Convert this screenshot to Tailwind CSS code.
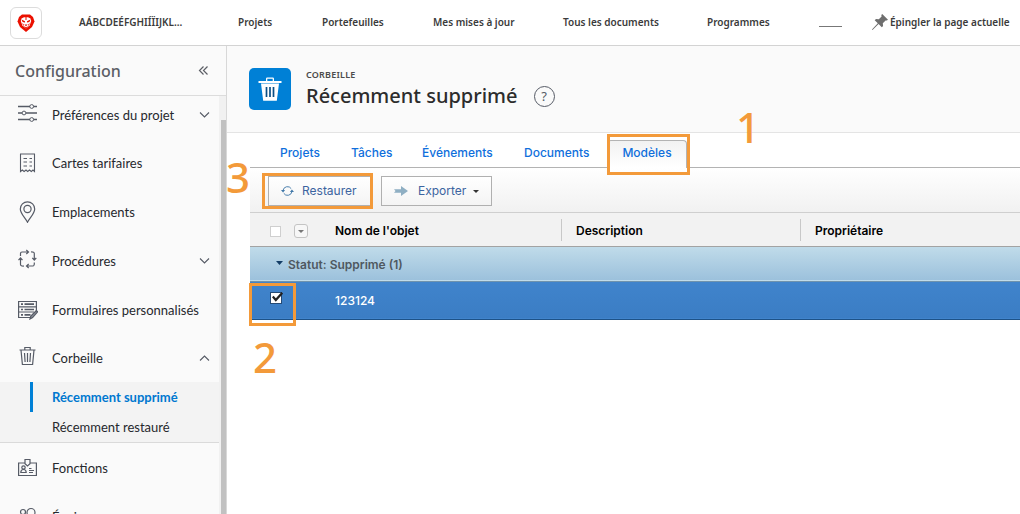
<!DOCTYPE html>
<html lang="fr">
<head>
<meta charset="utf-8">
<meta name="viewport" content="width=device-width, initial-scale=1">
<title>Configuration – Récemment supprimé</title>
<script src="https://cdn.jsdelivr.net/npm/@tailwindcss/browser@4"></script>
</head>
<body class="flex h-screen flex-col overflow-hidden bg-white font-['Noto_Sans','Open_Sans',sans-serif] text-[#2c2c2c]">

<header class="flex h-[46px] shrink-0 items-center border-b border-[#d3d3d3] bg-white pl-[10px]">
  <a href="#" aria-label="Accueil" class="mr-[37px] flex size-8 shrink-0 items-center justify-center rounded-md border border-[#dcdcdc]">
    <svg class="size-[18px]" viewBox="0 0 18 18">
      <path d="M5 .5h8l3 2.500 1.500 4.500-2.500 5.500-6 5-6-5L.5 7.500 2 3z" fill="#eb1000"/>
      <path d="M4.500 4.500 7 3.200h4L13.500 4.500l.7 2.500-1.600 4.500L9 14.500 5.400 11.500 3.800 7z" fill="#fff"/>
      <path d="M4.500 5.500l3.500 1.800v1.200L5.600 8zM13.500 5.500 10 7.300v1.200l2.400-.5zM7.300 10.500h3.400L9 12.300zM6.500 12 9 13.200 11.500 12 9 14.500zM8.500 3h1v3h-1zM5 9.300l1.700 1v2zM13 9.300l-1.700 1v2z" fill="#eb1000"/>
    </svg>
  </a>
  <nav class="grid grow grid-cols-[159px_84px_111px_130px_144px_112px_53px_1fr] items-center pb-[2px] text-[10px] leading-4 font-semibold whitespace-nowrap text-[#3b3b3b]">
    <a href="#">AÁBCDEÉFGHIÍÏIJKL…</a>
    <a href="#">Projets</a>
    <a href="#">Portefeuilles</a>
    <a href="#">Mes mises à jour</a>
    <a href="#">Tous les documents</a>
    <a href="#">Programmes</a>
    <a href="#" aria-label="Page épinglée" class="mt-[10px] w-[23px] border-b border-[#777]"></a>
    <button class="flex items-center gap-[2px]">
      <svg class="size-4" viewBox="0 0 16 16" fill="#6e6e6e"><path d="M10.200 0 16 5.800l-1.200.8-1.200-.2-2.800 2.900.3 2.600-1.300 1.300-3.200-3.200L.8 15.800 0 16l.2-.8L5.800 9.200 2.700 6.200 4 4.900l2.800.3L9.600 2.400l-.3-1.300z"/></svg>
      Épingler la page actuelle
    </button>
  </nav>
</header>

<div class="flex min-h-0 grow">
  <aside class="flex w-[227px] shrink-0 flex-col border-r border-[#d8d8d8] bg-[#fafafa]">
    <div class="flex h-[50px] shrink-0 items-center justify-between border-b border-[#dcdcdc] pr-[17px] pl-[15px]">
      <h2 class="text-[16px] leading-6 font-medium text-[#5c5f66]">Configuration</h2>
      <button aria-label="Réduire le menu"><svg class="h-[9px] w-[11px]" viewBox="0 0 11 9" fill="none" stroke="#5c5f66" stroke-width="1.200"><path d="M5.500.5l-4 4 4 4M9.500.5l-4 4 4 4"/></svg></button>
    </div>
    <div class="flex min-h-0 grow">
      <ul class="min-w-0 grow overflow-hidden font-['Lato','Noto_Sans',sans-serif] text-[13px] leading-4 text-[#26282d]">
        <li><a href="#" class="flex h-[42px] items-center gap-[14px] pr-[9px] pb-1 pl-[18px]">
          <svg class="mb-1 size-5 shrink-0" viewBox="0 0 20 20" fill="none" stroke="#565b66"><path d="M0 3.500h12M15.500 3.500H19M0 10h4M8 10h11M0 16.500h12M15.500 16.500H19" stroke-width="1.300"/><circle cx="13.700" cy="3.500" r="1.900"/><circle cx="6" cy="10" r="1.900"/><circle cx="13.700" cy="16.500" r="1.900"/></svg>
          <span class="grow">Préférences du projet</span>
          <svg class="h-[6px] w-[11px]" viewBox="0 0 11 6" fill="none" stroke="#565b66" stroke-width="1.100"><path d="M1 .5l4.500 4.500L10 .5"/></svg></a></li>
        <li><a href="#" class="flex h-[49px] items-center gap-[14px] pl-[18px]">
          <svg class="size-5 shrink-0" viewBox="0 0 20 20" fill="none" stroke="#565b66" stroke-width="1.100"><path d="M2 1h15M2.500 1v17.500l1.800-1.500 1.800 1.500L8 17l1.700 1.500 1.800-1.500 1.800 1.500 1.700-1.500 1.500 1.500V1"/><path d="M5.500 5.500H9M11.500 5.500H14M5.500 9H9M11.500 9H14M5.500 13H9M11.500 13H14" stroke-width="1.200"/></svg>
          <span>Cartes tarifaires</span></a></li>
        <li><a href="#" class="flex h-[49px] items-center gap-[14px] pl-[18px]">
          <svg class="h-[22px] w-5 shrink-0" viewBox="0 0 20 22" fill="none" stroke="#565b66" stroke-width="1.200"><path d="M9.500 21.300C7 16.500 2.300 12.500 2.300 8a7.200 7.200 0 0 1 14.400 0c0 4.500-4.700 8.500-7.200 13.300z"/><circle cx="9.500" cy="8" r="3.600"/></svg>
          <span>Emplacements</span></a></li>
        <li><a href="#" class="flex h-[49px] items-center gap-[14px] pr-[9px] pl-[18px]">
          <svg class="mb-1 size-5 shrink-0" viewBox="0 0 20 20" fill="none" stroke="#565b66" stroke-width="1.200"><path d="M3 7V4.500Q3 3 4.500 3H11M8.800 1 11 3 8.800 5M13.500 3Q16.800 2.700 16.800 4.500V11M14.800 8.800l2 2.200 2-2.200M16.800 13.500Q17 17 15.300 17H9M11.200 15 9 17l2.200 2M6.500 17Q3 17.300 3 15.500V9M1 11.200 3 9l2 2.200" transform="translate(-.5)"/></svg>
          <span class="grow">Procédures</span>
          <svg class="h-[6px] w-[11px]" viewBox="0 0 11 6" fill="none" stroke="#565b66" stroke-width="1.100"><path d="M1 .5l4.500 4.500L10 .5"/></svg></a></li>
        <li><a href="#" class="flex h-[49px] items-center gap-[14px] pl-[18px] whitespace-nowrap">
          <svg class="size-5 shrink-0" viewBox="0 0 20 20" fill="none" stroke="#565b66" stroke-width="1.200"><path d="M12.500 17.500H.6V1.500h17.800V12M.6 6.800h17.800M.6 12h15.400"/><path d="M3 4.200h2M6.500 4.200h9.500M3 9.500h2M6.500 9.500h9.500M3 14.800h2M6.500 14.800h6" stroke-width="1.700"/><path d="M12 19l.8-3 5.500-5.500 1.300 1.300-5 5.800z" fill="#8b8f98"/></svg>
          <span>Formulaires personnalisés</span></a></li>
        <li><a href="#" class="flex h-12 items-center gap-[14px] pr-[9px] pl-[18px]">
          <svg class="mb-1 size-5 shrink-0" viewBox="0 0 20 20" fill="none" stroke="#565b66" stroke-width="1.200"><path d="M1.500 4h16M6.800 4V1.500h5.400V4M3 4l1.400 14.500h10.200L16 4M6.500 7l.6 9M9.500 7v9M12.500 7l-.6 9"/></svg>
          <span class="grow">Corbeille</span>
          <svg class="h-[6px] w-[11px]" viewBox="0 0 11 6" fill="none" stroke="#565b66" stroke-width="1.100"><path d="M1 5.500 5.500 1 10 5.500"/></svg></a>
          <ul class="border-b border-[#dadada] bg-[#f3f3f3] pl-[30px]">
            <li><a href="#" class="flex h-[30px] items-center border-l-3 border-[#0080d6] pl-[19px] font-bold text-[#0078d0]">Récemment supprimé</a></li>
            <li><a href="#" class="flex h-[30px] items-center pl-[22px]">Récemment restauré</a></li>
          </ul></li>
        <li><a href="#" class="flex h-[49px] items-center gap-[14px] pl-[18px]">
          <svg class="size-5 shrink-0" viewBox="0 0 20 20" fill="none" stroke="#565b66" stroke-width="1.200"><path d="M7 5H.6v12.500h17.800V5H12M7 1.500h5v4.300L9.500 8 7 5.800z"/><circle cx="5.500" cy="9.500" r="1.700"/><path d="M2.800 14.500c0-2 1-3 2.700-3s2.700 1 2.700 3zM11 10.500h2.500M11 12.500h5M11 14.500h4"/></svg>
          <span>Fonctions</span></a></li>
        <li><a href="#" class="flex h-[49px] items-center gap-[14px] pl-[18px]">
          <svg class="size-5 shrink-0" viewBox="0 0 20 20" fill="none" stroke="#565b66" stroke-width="1.200"><circle cx="5" cy="5" r="2.500"/><circle cx="13" cy="5.500" r="4"/><path d="M1 15c0-4 1.500-6 4-6M6 18c0-5 3-8 7-8s6 3 6 8"/></svg>
          <span>Équipes</span></a></li>
      </ul>
      <div class="flex w-[7px] shrink-0 flex-col bg-[#f1f1f1] pt-6 pl-[2px]"><div class="grow bg-[#c1c1c1]"></div></div>
    </div>
  </aside>

  <main class="min-w-0 grow">
    <div class="flex h-[87px] items-center gap-[15px] border-b border-[#e4e4e4] bg-[#fafafa] pl-[22px]">
      <div class="flex size-[42px] items-center justify-center rounded-[5px] bg-[#0080d6]">
        <svg class="size-6" viewBox="0 0 24 24"><path d="M.5 4h7.500V1.800Q8 .5 9.300.5h5.400Q16 .5 16 1.800V4h7.500v2H.5zM9.300 4h5.400V1.800H9.300zM3 6.500h18l-2.200 17.200H5.200z" fill="#fff" fill-rule="evenodd"/><path d="M8.500 10v10M12 10v10M15.500 10v10" stroke="#0b4f85" stroke-width="1.700"/></svg>
      </div>
      <div class="pt-[2px]">
        <p class="text-[9px] leading-3 font-semibold tracking-wide text-[#4b4b4b]">CORBEILLE</p>
        <div class="flex items-center gap-4">
          <h1 class="text-[20px] leading-[30px] font-medium text-[#2c2c2c]">Récemment supprimé</h1>
          <button aria-label="Aide" class="flex size-[21px] items-center justify-center rounded-full border border-[#565b66] text-[13px] leading-4 text-[#565b66]">?</button>
        </div>
      </div>
    </div>

    <section class="pl-[23px] font-['Inter',sans-serif]">
      <nav class="flex h-[35px] items-end border-b border-[#b3b3b3] text-[12px] leading-4 font-medium text-[#0f6fdc]">
        <a href="#" class="ml-[30px] w-[71px] pb-[6px]">Projets</a>
        <a href="#" class="w-[71px] pb-[6px]">Tâches</a>
        <a href="#" class="w-[102px] pb-[6px]">Événements</a>
        <a href="#" class="w-[83px] pb-[6px]">Documents</a>
        <a href="#" aria-current="page" class="relative -mb-px h-[28px] w-20 rounded-t-[4px] border-x border-t border-[#b3b3b3] bg-linear-to-b from-[#f2f2f2] to-white pt-1 text-center">Modèles
          <span class="absolute -top-[7px] -left-px h-[41px] w-[83px] border-3 border-[#f39a3a]"></span>
          <span class="absolute -top-[37px] left-[128px] font-['Noto_Sans',sans-serif] text-[42px] leading-[46px] font-medium text-[#f39a3a]">1</span>
        </a>
      </nav>

      <div class="flex h-[45px] items-center gap-2 border-b border-[#cfcfcf] bg-linear-to-b from-white to-[#f1f1f1] pt-[2px] pl-[18px] text-[12px] leading-4 text-[#3c64a0]">
        <button class="relative flex h-[30px] w-[105px] items-center gap-2 border border-[#b0b0b0] bg-linear-to-b from-white to-[#f4f4f4] pl-3">
          <svg class="h-3 w-[13px]" viewBox="0 0 14 12" fill="none" stroke="#3f77a8" stroke-width="1"><path d="M2.300 5A4.800 4.800 0 0 1 11 3.500M11.700 7A4.800 4.800 0 0 1 3 8.500"/><path d="M0 5h4.400L2.200 7.500zM9.600 7H14L11.800 4.500z" fill="#3f77a8" stroke="none"/></svg>
          Restaurer
          <span class="absolute -top-1 -left-[7px] h-9 w-[111px] border-3 border-[#f39a3a]"></span>
          <span class="absolute -top-[23px] -left-[43px] font-['Noto_Sans',sans-serif] text-[42px] leading-[46px] font-medium text-[#f39a3a]">3</span>
        </button>
        <button class="flex h-[30px] w-[111px] items-center border border-[#b0b0b0] bg-linear-to-b from-white to-[#f4f4f4] pl-3">
          <svg class="mr-[10px] h-[10px] w-[14px]" viewBox="0 0 14 10"><path d="M0 3.200h7V0l7 5-7 5V6.800H0L1.500 5z" fill="#8fafc3"/></svg>
          Exporter
          <svg class="ml-[7px] h-[3px] w-[6px]" viewBox="0 0 6 3"><path d="M0 0h6L3 3z" fill="#333"/></svg>
        </button>
      </div>

      <table class="w-full table-fixed border-collapse text-[12px] leading-4">
        <colgroup><col class="w-[85px]"><col class="w-[226px]"><col class="w-[239px]"><col></colgroup>
        <thead>
          <tr class="h-[33px] border-b border-[#a3a3a3] bg-[#f2f2f2] text-left font-semibold text-black">
            <th class="pt-1 pl-5"><div class="flex items-center gap-[13px]">
              <input type="checkbox" aria-label="Tout sélectionner" class="size-[11px] appearance-none border border-[#cfcfcf] bg-white">
              <button aria-label="Options de sélection" class="flex size-[14px] items-center justify-center rounded-[3px] border border-[#c4c4c4] bg-[#f7f7f7]"><svg class="h-[3px] w-[6px]" viewBox="0 0 6 3"><path d="M0 0h6L3 3z" fill="#777"/></svg></button>
            </div></th>
            <th class="pt-[3px] font-semibold">Nom de l'objet</th>
            <th class="pt-[2px]"><div class="h-[22px] border-l border-[#c8c8c8] pt-1 pl-[14px] font-semibold">Description</div></th>
            <th class="pt-[2px]"><div class="h-[22px] border-l border-[#c8c8c8] pt-1 pl-[14px] font-semibold">Propriétaire</div></th>
          </tr>
        </thead>
        <tbody>
          <tr class="h-[35px] border-b border-[#6f93ad] bg-linear-to-b from-[#c1dcea] to-[#9cc1dc]">
            <td colspan="4" class="pt-[2px] pl-[26px] font-semibold text-[#4f5860]"><button class="flex items-center gap-[5px]"><svg class="mb-1 h-1 w-[7px]" viewBox="0 0 7 4"><path d="M0 0h7L3.500 4z" fill="#133d66"/></svg>Statut: Supprimé (1)</button></td>
          </tr>
          <tr class="h-[38px] border-b border-[#1d5288] bg-linear-to-b from-[#4084cc] to-[#3b7dc4] font-medium text-white">
            <td class="pl-5"><label class="relative flex pb-1">
              <input type="checkbox" checked aria-label="Sélectionner 123124" class="size-3 appearance-none border border-[#254a75] bg-white">
              <svg class="pointer-events-none absolute top-0 left-[2px] h-[11px] w-[11px]" viewBox="0 0 11 11" fill="none" stroke="#222" stroke-width="2.200"><path d="M.8 4.500 3.800 8 10.300.8"/></svg>
              <span class="pointer-events-none absolute -top-[9px] -left-[21px] h-[43px] w-[47px] border-3 border-[#f39a3a]"></span>
              <span class="pointer-events-none absolute top-[42px] -left-[17px] font-['Noto_Sans',sans-serif] text-[42px] leading-[46px] font-medium text-[#f39a3a]">2</span>
            </label></td>
            <td colspan="3" class="pt-[2px]">123124</td>
          </tr>
        </tbody>
      </table>
    </section>
  </main>
</div>
</body>
</html>
